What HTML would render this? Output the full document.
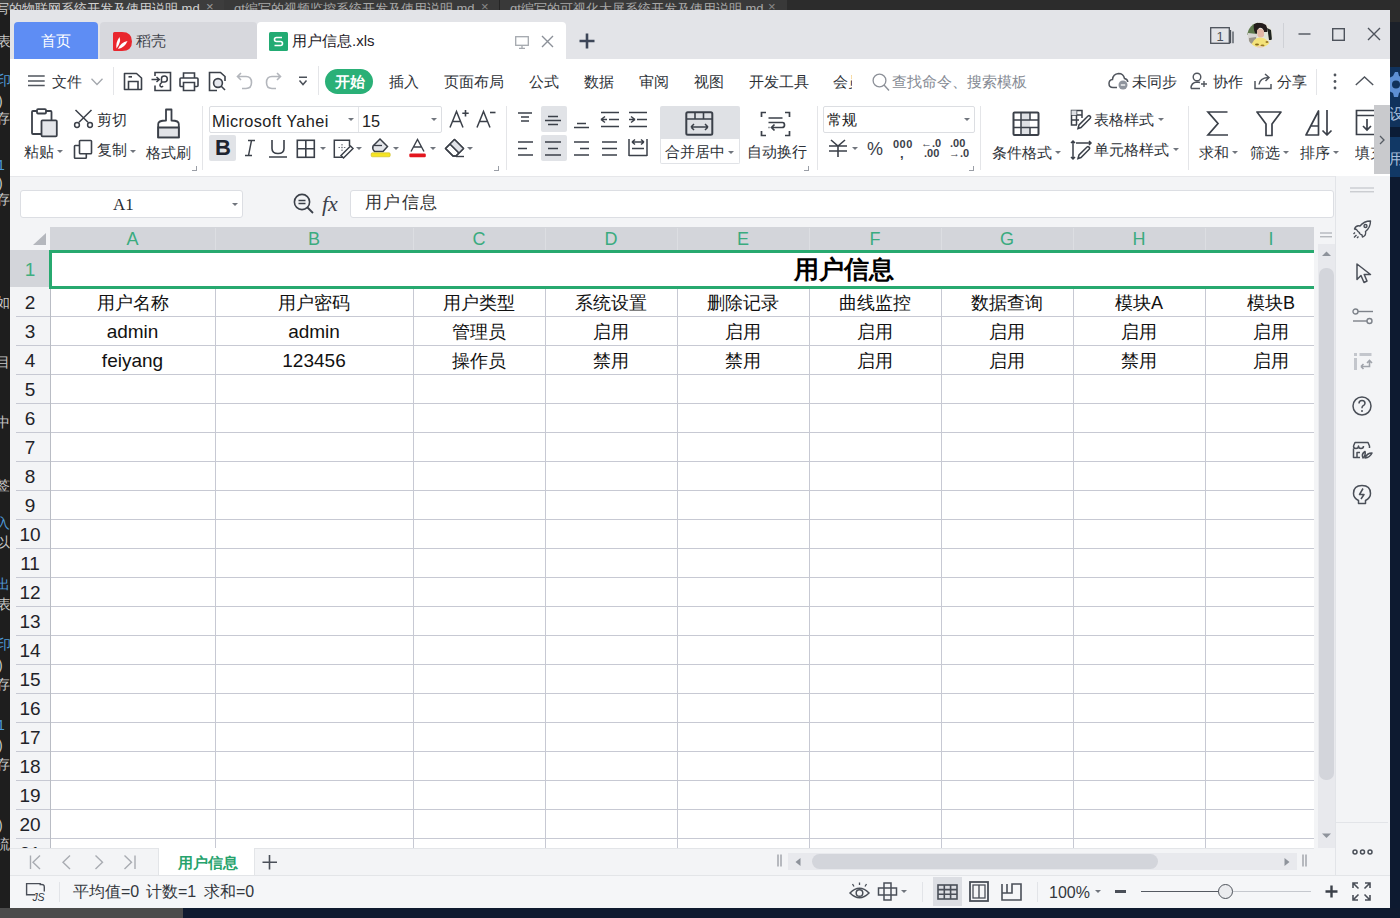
<!DOCTYPE html>
<html><head><meta charset="utf-8">
<style>
*{box-sizing:border-box;margin:0;padding:0}
html,body{width:1400px;height:918px;overflow:hidden;background:#1e1e1e;font-family:"Liberation Sans",sans-serif;color:#2b2f36}
.a{position:absolute}
.t{position:absolute;white-space:nowrap;line-height:1}
svg{position:absolute;overflow:visible}
/* background strips */
#topstrip{left:0;top:0;width:1400px;height:10px;background:#3b3b3b;overflow:hidden}
#win{left:10px;top:10px;width:1380px;height:898px;background:#fff;overflow:hidden}
#titlebar{left:0;top:0;width:1380px;height:49px;background:#e3e4e8}
.ic{stroke:#3b4049;fill:none;stroke-width:1.4}
.lbl{font-size:15px;color:#2e3238}
.tri{position:absolute;width:0;height:0;border-left:3px solid transparent;border-right:3px solid transparent;border-top:3px solid #70757d}
.sep{position:absolute;width:1px;background:#e4e5e8}
.corner{position:absolute;width:5px;height:5px;border-right:1px solid #9a9ea6;border-bottom:1px solid #9a9ea6}
.hl{position:absolute;background:#e1e3e7;border-radius:2px}
.colh{position:absolute;top:217px;height:23px;font-size:18px;color:#3aab7f;text-align:center;line-height:23px}
.rowh{position:absolute;left:0;width:40px;font-size:19px;text-align:center;color:#1f2329}
.cell{position:absolute;font-size:18px;text-align:center;color:#111;white-space:nowrap}
</style></head><body>
<div id="topstrip" class="a">
  <div class="a" style="left:0;top:0;width:224px;height:10px;background:#3d3d3d"></div>
  <div class="t" style="left:-4px;top:2px;font-size:13px;color:#d0d0d0">写的物联网系统开发及使用说明.md</div>
  <div class="t" style="left:206px;top:0px;font-size:13px;color:#9a9a9a">×</div>
  <div class="a" style="left:224px;top:0;width:275px;height:10px;background:#393939"></div>
  <div class="t" style="left:234px;top:2px;font-size:13px;color:#a8a8a8">qt编写的视频监控系统开发及使用说明.md</div>
  <div class="t" style="left:481px;top:0px;font-size:13px;color:#8a8a8a">×</div>
  <div class="a" style="left:499px;top:0;width:1px;height:10px;background:#252525"></div>
  <div class="a" style="left:500px;top:0;width:287px;height:10px;background:#393939"></div>
  <div class="t" style="left:510px;top:2px;font-size:13px;color:#a8a8a8">qt编写的可视化大屏系统开发及使用说明.md</div>
  <div class="t" style="left:768px;top:0px;font-size:13px;color:#8a8a8a">×</div>
  <div class="a" style="left:787px;top:0;width:613px;height:10px;background:#2c2c2c"></div>
</div>
<!-- left strip -->
<div class="a" style="left:0;top:10px;width:10px;height:898px;background:#1e1e1e;overflow:hidden">
  <div class="t" style="left:-4px;top:-8px;font-size:13px;color:#d0d0d0">写</div>
  <div class="t" style="left:-3px;top:24px;font-size:14px;color:#c8c8c8">表</div>
  <div class="t" style="left:-3px;top:63px;font-size:14px;color:#4f9ad8">印</div>
  <div class="t" style="left:-2px;top:84px;font-size:14px;color:#c8c8c8">)</div>
  <div class="t" style="left:-4px;top:101px;font-size:14px;color:#c8c8c8">存</div>
  <div class="t" style="left:-3px;top:148px;font-size:14px;color:#4f9ad8">1</div>
  <div class="t" style="left:-2px;top:166px;font-size:14px;color:#c8c8c8">)</div>
  <div class="t" style="left:-4px;top:182px;font-size:14px;color:#c8c8c8">存</div>
  <div class="t" style="left:-4px;top:285px;font-size:14px;color:#c8c8c8">如</div>
  <div class="t" style="left:-4px;top:345px;font-size:14px;color:#c8c8c8">目</div>
  <div class="t" style="left:-4px;top:405px;font-size:14px;color:#c8c8c8">中</div>
  <div class="t" style="left:-4px;top:468px;font-size:14px;color:#c8c8c8">签</div>
  <div class="t" style="left:-4px;top:506px;font-size:14px;color:#4f9ad8">入</div>
  <div class="t" style="left:-4px;top:525px;font-size:14px;color:#c8c8c8">以</div>
  <div class="t" style="left:-4px;top:567px;font-size:14px;color:#4f9ad8">出</div>
  <div class="t" style="left:-3px;top:587px;font-size:14px;color:#c8c8c8">表</div>
  <div class="t" style="left:-3px;top:627px;font-size:14px;color:#4f9ad8">印</div>
  <div class="t" style="left:-2px;top:648px;font-size:14px;color:#c8c8c8">)</div>
  <div class="t" style="left:-4px;top:667px;font-size:14px;color:#c8c8c8">存</div>
  <div class="t" style="left:-3px;top:708px;font-size:14px;color:#4f9ad8">1</div>
  <div class="t" style="left:-2px;top:728px;font-size:14px;color:#c8c8c8">)</div>
  <div class="t" style="left:-4px;top:747px;font-size:14px;color:#c8c8c8">存</div>
  <div class="t" style="left:-2px;top:808px;font-size:14px;color:#c8c8c8">)</div>
  <div class="t" style="left:-4px;top:827px;font-size:14px;color:#c8c8c8">流</div>
</div>
<!-- right strip -->
<div class="a" style="left:1390px;top:10px;width:10px;height:908px;background:#0d1a30;overflow:hidden">
  <div class="a" style="left:0;top:0;width:10px;height:12px;background:#2b2b2b"></div>
  <div class="a" style="left:0;top:12px;width:10px;height:45px;background:#1b2029"></div>
  <div class="a" style="left:0;top:57px;width:10px;height:60px;background:#10325c"></div>
  <div class="a" style="left:0;top:117px;width:10px;height:10px;background:#0b1c36"></div>
  <div class="a" style="left:0;top:127px;width:10px;height:40px;background:#113865"></div>
  <svg style="left:-6px;top:60px" width="22" height="30" viewBox="0 0 22 30"><path d="M11 2 L14 2 L15 6 L19 8 L22 6 L24 9 L21 12 L21 17 L24 20 L22 23 L18 21 L15 23 L14 27 L10 27 L9 23 L5 21 L2 23 L0 20 L3 17 L3 12 L0 9 L2 6 L5 8 L9 6 Z" fill="#5d8fd3"/><circle cx="12" cy="14.5" r="4" fill="#10325c"/></svg>
  <div class="t" style="left:-1px;top:96px;font-size:15px;color:#a9bfdc">设</div>
  <div class="t" style="left:-1px;top:141px;font-size:15px;color:#a9bfdc">用</div>
</div>
<div class="a" style="left:0;top:908px;width:183px;height:10px;background:#4b4b4b"></div>
<div class="a" style="left:183px;top:908px;width:1217px;height:10px;background:#0f1a2f"></div>

<div class="a" style="left:10px;top:10px;width:1380px;height:898px;background:#fff"></div>
<!-- TITLEBAR -->
<div class="a" style="left:10px;top:10px;width:1380px;height:49px;background:#e3e4e8"></div>
<div class="a" style="left:14px;top:22px;width:84px;height:37px;background:#5e8df4;border-radius:4px 4px 0 0"></div>
<div class="t" style="left:41px;top:33px;font-size:15px;color:#fff">首页</div>
<div class="a" style="left:100px;top:22px;width:157px;height:37px;background:#d7d8dd;border-radius:4px 4px 0 0"></div>
<div class="t" style="left:136px;top:33px;font-size:15px;color:#3d4149">稻壳</div>
<div class="a" style="left:257px;top:22px;width:309px;height:37px;background:#fff;border-radius:4px 4px 0 0"></div>
<div class="t" style="left:292px;top:33px;font-size:15px;color:#1d2128">用户信息.xls</div>
<!--TITLEICONS--><svg style="left:113px;top:32px" width="20" height="20" viewBox="0 0 20 20"><path d="M0 1.5 Q0 0 1.5 0 L9 0 Q19 0 19 9.5 Q19 19 9 19 L1.5 19 Q0 19 0 17.5 Z" fill="#e9262d"/><path d="M3.5 16.5 Q2.5 10.5 6.5 5 Q8.5 10 3.5 16.5 Z" fill="#fff"/><path d="M5 17 Q7.5 10.5 14.5 9 Q12 15.5 5 17 Z" fill="#fff"/></svg>
<svg style="left:269px;top:32px" width="19" height="19" viewBox="0 0 19 19"><rect x="0" y="0" width="19" height="19" rx="1.5" fill="#22ab73"/><path d="M13 5.5 L7.5 5.5 Q5.5 5.5 5.5 7.5 Q5.5 9.5 7.5 9.5 L11.5 9.5 Q13.5 9.5 13.5 11.5 Q13.5 13.5 11.5 13.5 L5.5 13.5" stroke="#fff" stroke-width="1.6" fill="none"/></svg>
<svg style="left:515px;top:36px" width="14" height="13" viewBox="0 0 14 13"><rect x="0.7" y="0.7" width="12.6" height="8.6" stroke="#a4a8ae" stroke-width="1.3" fill="none"/><path d="M7 9.5 V12.3 M4 12.3 H10" stroke="#a4a8ae" stroke-width="1.3"/></svg>
<svg style="left:541px;top:35px" width="13" height="13" viewBox="0 0 13 13"><path d="M1 1 L12 12 M12 1 L1 12" stroke="#8b9098" stroke-width="1.4"/></svg>
<svg style="left:579px;top:33px" width="16" height="16" viewBox="0 0 16 16"><path d="M8 0.5 V15.5 M0.5 8 H15.5" stroke="#3d4658" stroke-width="2.6"/></svg>
<svg style="left:1210px;top:27px" width="26" height="17" viewBox="0 0 26 17"><rect x="0.7" y="0.7" width="18.6" height="15.6" stroke="#4b5059" stroke-width="1.3" fill="none"/><path d="M20.5 3 V16.3 M23 4.5 V16.3" stroke="#4b5059" stroke-width="1.3"/><text x="10" y="13.5" font-size="13" text-anchor="middle" fill="#4b5059" font-family="Liberation Sans">1</text></svg>
<svg style="left:1247px;top:22px" width="26" height="26" viewBox="0 0 26 26"><defs><clipPath id="av"><circle cx="13" cy="13" r="12.5"/></clipPath></defs><g clip-path="url(#av)"><rect width="26" height="26" fill="#e6e4d8"/><path d="M0 0 H11 L9 12 L0 13 Z" fill="#5f7a4e"/><path d="M1 11 L10 12 L10 18 L1 19 Z" fill="#d8d6d3"/><path d="M2 16 L9 15 V21 L2 22 Z" fill="#9a958c"/><path d="M7 2 Q13 -1 19 3 Q21 7 20 11 L17 10 Q16 5 12 6 Q10 8 10 12 L8 11 Q6 6 7 2 Z" fill="#231c1c"/><path d="M10 8 Q14 5 17 9 L17 14 Q13.5 17 10.5 14 Z" fill="#e2b6a6"/><path d="M20 6 L24 8 L25 18 L22 18 L21 11 Z" fill="#1f2420"/><path d="M17 10 L21 10 L21 17 L17 16 Z" fill="#dfe4d8"/><path d="M4 26 Q5 16 13 15.5 Q22 16 24 26 Z" fill="#f3e27a"/><ellipse cx="10" cy="22.5" rx="2" ry="1" fill="#8a6a18"/><ellipse cx="15.5" cy="23.5" rx="2" ry="1" fill="#9a7a28"/><ellipse cx="20" cy="20" rx="1.5" ry="1" fill="#9a7a28"/><path d="M9 25 Q13 23 17 25 V26 H9 Z" fill="#e9c9c9"/></g></svg>
<div class="a" style="left:1283px;top:23px;width:1px;height:25px;background:#cfd1d6"></div>
<svg style="left:1298px;top:33px" width="14" height="3" viewBox="0 0 14 3"><path d="M0.5 1 H12.5" stroke="#4e535c" stroke-width="1.4"/></svg>
<svg style="left:1332px;top:28px" width="13" height="13" viewBox="0 0 13 13"><rect x="0.7" y="0.7" width="11.6" height="11.6" stroke="#4e535c" stroke-width="1.4" fill="none"/></svg>
<svg style="left:1367px;top:27px" width="14" height="14" viewBox="0 0 14 14"><path d="M1 1 L13 13 M13 1 L1 13" stroke="#4e535c" stroke-width="1.4"/></svg>

<!-- TOOLBAR ROW1 -->
<div class="t lbl" style="left:52px;top:74px">文件</div>
<div class="sep" style="left:113px;top:67px;height:28px"></div>
<div class="sep" style="left:318px;top:66px;height:29px"></div>
<div class="a" style="left:325px;top:69px;width:48px;height:25px;border-radius:13px;background:#2ab077"></div>
<div class="t" style="left:335px;top:74px;font-size:15px;color:#fff;font-weight:bold">开始</div>
<div class="t lbl" style="left:389px;top:74px">插入</div>
<div class="t lbl" style="left:444px;top:74px">页面布局</div>
<div class="t lbl" style="left:529px;top:74px">公式</div>
<div class="t lbl" style="left:584px;top:74px">数据</div>
<div class="t lbl" style="left:639px;top:74px">审阅</div>
<div class="t lbl" style="left:694px;top:74px">视图</div>
<div class="t lbl" style="left:749px;top:74px">开发工具</div>
<div class="a" style="left:833px;top:66px;width:19px;height:30px;overflow:hidden"><div class="t lbl" style="left:0;top:8px">会员</div></div>
<div class="t" style="left:892px;top:74px;font-size:15px;color:#868b94">查找命令、搜索模板</div>
<div class="t lbl" style="left:1132px;top:74px">未同步</div>
<div class="t lbl" style="left:1213px;top:74px">协作</div>
<div class="t lbl" style="left:1277px;top:74px">分享</div>
<div class="sep" style="left:1316px;top:69px;height:26px"></div>
<!--ROW1ICONS--><svg style="left:28px;top:75px" width="17" height="12" viewBox="0 0 17 12"><path d="M0 1 H16.7 M0 6 H16.7 M0 10.5 H16.7" stroke="#50555d" stroke-width="1.5"/></svg>
<svg style="left:91px;top:78px" width="12" height="8" viewBox="0 0 12 8"><path d="M0.5 0.8 L6 6.5 L11.5 0.8" stroke="#a3a7ad" stroke-width="1.3" fill="none"/></svg>
<svg style="left:123px;top:72px" width="20" height="19" viewBox="0 0 20 19"><path d="M1.5 1.5 H13.5 L18.5 6 V17.5 H1.5 Z" stroke="#3b4049" stroke-width="1.6" fill="none" stroke-linejoin="round"/><path d="M5.5 17.5 V9.5 H15 V17.5" stroke="#3b4049" stroke-width="1.6" fill="none"/><path d="M5.5 4.8 H9" stroke="#3b4049" stroke-width="1.7"/></svg>
<svg style="left:151px;top:71px" width="21" height="21" viewBox="0 0 21 21"><path d="M4 5 V1.5 H19.5 V19.5 H4 V14.5" stroke="#3b4049" stroke-width="1.6" fill="none"/><path d="M0.5 8.5 H8 M5.5 6 L8.3 8.5 L5.5 11" stroke="#3b4049" stroke-width="1.5" fill="none"/><path d="M10.5 12 V7.5 Q10.5 5 13.3 5 Q16.3 5 16.3 8 Q16.3 11 13.3 11 H10.5 M10.5 12 Q8 13.5 9.5 15.5 Q11 16.5 12 15" stroke="#3b4049" stroke-width="1.5" fill="none"/></svg>
<svg style="left:179px;top:71px" width="20" height="21" viewBox="0 0 20 21"><path d="M4.5 7 V2 H15.5 V7" stroke="#3b4049" stroke-width="1.6" fill="none"/><path d="M4 15.5 H1.5 Q1 15.5 1 14.5 V8 Q1 7 2 7 H18 Q19 7 19 8 V14.5 Q19 15.5 18 15.5 H16" stroke="#3b4049" stroke-width="1.6" fill="none"/><path d="M4.5 19.5 V11.5 H15.5 V19.5 Z" stroke="#3b4049" stroke-width="1.6" fill="none"/></svg>
<svg style="left:208px;top:71px" width="19" height="21" viewBox="0 0 19 21"><path d="M9 19.5 H1.5 V1.5 H12.5 L17 5.5 V10" stroke="#3b4049" stroke-width="1.6" fill="none"/><circle cx="10" cy="12" r="4.4" stroke="#3b4049" stroke-width="1.6" fill="#e6e8ee"/><path d="M13 15 L17 19" stroke="#3b4049" stroke-width="1.6"/></svg>
<svg style="left:236px;top:72px" width="17" height="18" viewBox="0 0 17 18"><path d="M5 1 L1.5 4.5 L5 8 M1.5 4.5 H10 Q15.5 4.5 15.5 10.5 Q15.5 16.5 10 16.5 H6" stroke="#b3b6bc" stroke-width="1.6" fill="none"/></svg>
<svg style="left:265px;top:72px" width="17" height="18" viewBox="0 0 17 18"><path d="M12 1 L15.5 4.5 L12 8 M15.5 4.5 H7 Q1.5 4.5 1.5 10.5 Q1.5 16.5 7 16.5 H11" stroke="#b3b6bc" stroke-width="1.6" fill="none"/></svg>
<svg style="left:298px;top:76px" width="10" height="11" viewBox="0 0 10 11"><path d="M1 1.2 H9 M1.5 4.5 L5 8.5 L8.5 4.5" stroke="#4b5059" stroke-width="1.5" fill="none"/></svg>
<svg style="left:872px;top:73px" width="19" height="19" viewBox="0 0 19 19"><circle cx="7.5" cy="7.5" r="6.4" stroke="#8c9098" stroke-width="1.3" fill="none"/><path d="M12 12 L17 17.4" stroke="#8c9098" stroke-width="1.4"/></svg>
<svg style="left:1108px;top:72px" width="22" height="18" viewBox="0 0 22 18"><path d="M9 15.5 H5 Q1 15.5 1 11.5 Q1 8 4.5 7.5 Q5 2 10.5 1.5 Q15.5 1.5 16.5 6.5 Q19.5 7 19.8 10" stroke="#50555d" stroke-width="1.5" fill="none"/><circle cx="15" cy="13" r="4.5" fill="#8f949d"/><path d="M12.8 13 H17.2" stroke="#fff" stroke-width="1.3"/></svg>
<svg style="left:1190px;top:72px" width="18" height="18" viewBox="0 0 18 18"><circle cx="7" cy="5" r="3.8" stroke="#50555d" stroke-width="1.4" fill="none"/><path d="M1 16.5 Q1 10.5 7 10 Q9 10 10 10.5 M1 16.5 H10" stroke="#50555d" stroke-width="1.4" fill="none"/><path d="M14 9 V15 M11 12 H17" stroke="#50555d" stroke-width="1.4"/></svg>
<svg style="left:1254px;top:72px" width="19" height="18" viewBox="0 0 19 18"><path d="M1 9 V16.5 H17 V12" stroke="#50555d" stroke-width="1.5" fill="none"/><path d="M5 12.5 Q6 6 14 5.5 M11 2 L15 5.5 L11.5 9" stroke="#50555d" stroke-width="1.5" fill="none"/></svg>
<svg style="left:1333px;top:73px" width="4" height="17" viewBox="0 0 4 17"><circle cx="2" cy="2" r="1.4" fill="#50555d"/><circle cx="2" cy="8.5" r="1.4" fill="#50555d"/><circle cx="2" cy="15" r="1.4" fill="#50555d"/></svg>
<svg style="left:1355px;top:76px" width="19" height="10" viewBox="0 0 19 10"><path d="M0.8 9 L9.5 1 L18.2 9" stroke="#50555d" stroke-width="1.4" fill="none"/></svg>

<!-- RIBBON -->
<!--RIBBON--><!-- clipboard group -->
<svg style="left:31px;top:108px" width="27" height="30" viewBox="0 0 27 30"><path d="M6 3 H2 Q1 3 1 4 V25 Q1 26 2 26 H10" stroke="#3b4049" stroke-width="1.8" fill="none"/><path d="M15 3 H19.5 Q20.5 3 20.5 4 V12" stroke="#3b4049" stroke-width="1.8" fill="none"/><rect x="6" y="1.2" width="9" height="4.3" rx="1" stroke="#3b4049" stroke-width="1.8" fill="#fff"/><rect x="10.5" y="12.3" width="15.3" height="16" rx="1" stroke="#3b4049" stroke-width="1.8" fill="#e4e6ea"/></svg>
<div class="t" style="left:24px;top:144px;font-size:15px;color:#2e3238">粘贴</div>
<div class="tri" style="left:57px;top:150px"></div>
<svg style="left:74px;top:109px" width="19" height="19" viewBox="0 0 19 19"><path d="M1.5 1 L14 13.3 M17.5 1 L5 13.3" stroke="#3b4049" stroke-width="1.5"/><circle cx="3" cy="16" r="2.4" stroke="#3b4049" stroke-width="1.5" fill="#fff"/><circle cx="16" cy="16" r="2.4" stroke="#3b4049" stroke-width="1.5" fill="#fff"/></svg>
<div class="t" style="left:97px;top:112px;font-size:15px;color:#2e3238">剪切</div>
<svg style="left:73px;top:139px" width="20" height="21" viewBox="0 0 20 21"><path d="M6 6.5 H2.2 Q1.5 6.5 1.5 7.3 V18.5 Q1.5 19.3 2.2 19.3 H12.5 Q13.3 19.3 13.3 18.5 V15" stroke="#3b4049" stroke-width="1.6" fill="none"/><rect x="6.5" y="1.5" width="12" height="13.3" rx="0.8" stroke="#3b4049" stroke-width="1.6" fill="#fff"/></svg>
<div class="t" style="left:97px;top:142px;font-size:15px;color:#2e3238">复制</div>
<div class="tri" style="left:130px;top:150px"></div>
<svg style="left:157px;top:108px" width="23" height="31" viewBox="0 0 23 31"><path d="M9 12.5 V1.5 H14.5 V12.5 Q21.8 12.5 21.8 16 V29.3 H1.2 V16 Q1.2 12.5 9 12.5 Z" stroke="#3b4049" stroke-width="1.8" fill="#fff" stroke-linejoin="round"/><path d="M1.2 19.5 H21.8 V29.3 H1.2 Z" stroke="#3b4049" stroke-width="1.8" fill="#e1e3e7"/></svg>
<div class="t" style="left:146px;top:145px;font-size:15px;color:#2e3238">格式刷</div>
<div class="corner" style="left:192px;top:166px"></div>
<div class="sep" style="left:202px;top:106px;height:64px"></div>
<!-- font group -->
<div class="a" style="left:209px;top:106px;width:233px;height:27px;border:1px solid #dcdee2;border-radius:2px"></div>
<div class="a" style="left:358px;top:107px;width:1px;height:25px;background:#e3e5e8"></div>
<div class="t" style="left:212px;top:113px;font-size:16.3px;letter-spacing:0.4px;color:#222">Microsoft Yahei</div>
<div class="tri" style="left:348px;top:118px"></div>
<div class="t" style="left:362px;top:113px;font-size:16.3px;color:#222">15</div>
<div class="tri" style="left:431px;top:118px"></div>
<svg style="left:449px;top:109px" width="48" height="20" viewBox="0 0 48 20"><path d="M1 18.5 L7.5 2.5 L14 18.5 M3.6 12.5 H11.4" stroke="#3b4049" stroke-width="1.5" fill="none"/><path d="M16.5 1 V7.5 M13.3 4.2 H19.7" stroke="#3b4049" stroke-width="1.6"/><path d="M28 18.5 L34.5 2.5 L41 18.5 M30.6 12.5 H38.4" stroke="#3b4049" stroke-width="1.5" fill="none"/><path d="M41 3.5 H46.5" stroke="#3b4049" stroke-width="1.6"/></svg>
<div class="hl" style="left:209px;top:135px;width:27px;height:26px"></div>
<div class="t" style="left:215px;top:137px;font-size:22px;font-weight:bold;color:#1f2430">B</div>
<svg style="left:244px;top:139px" width="12" height="18" viewBox="0 0 12 18"><path d="M4 1.5 H11 M1 16.5 H8 M7.5 1.5 L4.5 16.5" stroke="#3b4049" stroke-width="1.4" fill="none"/></svg>
<svg style="left:268px;top:139px" width="20" height="20" viewBox="0 0 20 20"><path d="M4 1 V9.5 Q4 14.5 10 14.5 Q16 14.5 16 9.5 V1" stroke="#3b4049" stroke-width="1.6" fill="none"/><path d="M1 18 H19" stroke="#3b4049" stroke-width="1.5"/></svg>
<svg style="left:296px;top:139px" width="20" height="20" viewBox="0 0 20 20"><rect x="1.3" y="1.3" width="17" height="17" stroke="#3b4049" stroke-width="1.6" fill="none"/><path d="M9.8 1.3 V18.3 M1.3 9.8 H18.3" stroke="#3b4049" stroke-width="1.6"/></svg>
<div class="tri" style="left:320px;top:147px"></div>
<svg style="left:333px;top:139px" width="21" height="20" viewBox="0 0 21 20"><path d="M10 18.3 H1.3 V1.3 H16.5 V7" stroke="#3b4049" stroke-width="1.5" fill="none"/><path d="M9 5 V12 M5.5 8.5 H12.5" stroke="#70757d" stroke-width="1.2" stroke-dasharray="1.5 1.2"/><path d="M8 18.5 L17.5 9 L20 11.5 L10.5 21 Z" stroke="#3b4049" stroke-width="1.5" fill="#fff" transform="translate(0,-2)"/></svg>
<div class="tri" style="left:356px;top:147px"></div>
<svg style="left:370px;top:137px" width="22" height="21" viewBox="0 0 22 21"><path d="M3 9 L10 2 L17.5 9.5 L13 14.5 H4.5 Q2 12 3 9 Z" stroke="#3b4049" stroke-width="1.5" fill="#e4e6ea"/><path d="M3 8.5 L12 8.5" stroke="#3b4049" stroke-width="1.3"/><rect x="1.2" y="15.8" width="19" height="4" rx="1.2" fill="#f5e425" stroke="#c9bb20" stroke-width="0.6"/></svg>
<div class="tri" style="left:393px;top:147px"></div>
<svg style="left:408px;top:138px" width="19" height="20" viewBox="0 0 19 20"><path d="M3 13.5 L9.5 1.5 L16 13.5 M5.5 9 H13.5" stroke="#3b4049" stroke-width="1.4" fill="none"/><rect x="1.3" y="15.5" width="16.5" height="3.8" rx="1.2" fill="#e3161e"/></svg>
<div class="tri" style="left:430px;top:147px"></div>
<svg style="left:444px;top:138px" width="22" height="20" viewBox="0 0 22 20"><path d="M1.5 10.5 L10.5 1.5 L19.5 10.5 L12 18 H9 Z" stroke="#3b4049" stroke-width="1.5" fill="#fff" stroke-linejoin="round"/><path d="M6 6 L15 15" stroke="#3b4049" stroke-width="1.4"/><path d="M10.5 1.5 L19.5 10.5 L15 15 L6 6 Z" fill="#e1e3e8"/><path d="M1.5 10.5 L10.5 1.5 L19.5 10.5 L12 18 H9 Z M6 6 L15 15" stroke="#3b4049" stroke-width="1.5" fill="none" stroke-linejoin="round"/><path d="M12 18.5 H20" stroke="#3b4049" stroke-width="1.4"/></svg>
<div class="tri" style="left:467px;top:147px"></div>
<div class="corner" style="left:494px;top:166px"></div>
<div class="sep" style="left:506px;top:106px;height:64px"></div>
<!-- alignment group -->
<div class="hl" style="left:541px;top:106px;width:26px;height:26px"></div>
<div class="hl" style="left:541px;top:135px;width:26px;height:26px"></div>
<svg style="left:516px;top:110px" width="140" height="52" viewBox="0 0 140 52" stroke="#3b4049" stroke-width="1.5" fill="none">
 <path d="M2 3 H16 M5 7 H13 M5 11 H13"/>
 <path d="M29 10.5 H45 M32 6.5 H42 M32 14.5 H42"/>
 <path d="M58 17.5 H73 M61 13.5 H70"/>
 <path d="M85 2.5 H103 M93 9.5 H103 M85 16.5 H103 M85 9.5 L89 6.5 M85 9.5 L89 12.5 M85 9.5 H91"/>
 <path d="M113 2.5 H131 M121 9.5 H131 M113 16.5 H131 M119 9.5 L115 6.5 M119 9.5 L115 12.5 M113 9.5 H119"/>
 <path d="M2 32 H17 M2 38.5 H11 M2 45 H17"/>
 <path d="M29 32 H45 M32 38.5 H42 M29 45 H45"/>
 <path d="M58 32 H73 M64 38.5 H73 M58 45 H73"/>
 <path d="M86 32 H101 M86 38.5 H101 M86 45 H101"/>
 <path d="M113 29 V46 M131 29 V46 M113 45.5 H131 M116 38.5 H128 M116 32 H128 M116 32 L119 29.5 M116 32 L119 34.5 M128 32 L125 29.5 M128 32 L125 34.5"/>
</svg>
<div class="a" style="left:660px;top:106px;width:80px;height:33px;background:#dfe1e5;border-radius:2px 2px 0 0"></div>
<div class="a" style="left:660px;top:139px;width:80px;height:25px;background:#fff;border:1px solid #e1e3e7;border-top:none;border-radius:0 0 2px 2px"></div>
<svg style="left:685px;top:111px" width="29" height="26" viewBox="0 0 29 26"><rect x="1.3" y="1.3" width="26" height="22.5" rx="1.5" stroke="#3b4049" stroke-width="2" fill="none"/><path d="M1.3 8 H27.3 M10 1.3 V8 M18.5 1.3 V8" stroke="#3b4049" stroke-width="1.6"/><path d="M6 16 H23 M6 16 L9 13 M6 16 L9 19 M23 16 L20 13 M23 16 L20 19" stroke="#3b4049" stroke-width="1.5" fill="none"/></svg>
<div class="t" style="left:665px;top:144px;font-size:15px;color:#2e3238">合并居中</div>
<div class="tri" style="left:728px;top:151px"></div>
<svg style="left:760px;top:111px" width="31" height="26" viewBox="0 0 31 26" stroke="#3b4049" stroke-width="1.7" fill="none"><path d="M6 1.5 H1.5 V6 M25 1.5 H29.5 V6 M6 24.5 H1.5 V20 M25 24.5 H29.5 V20"/><path d="M8.5 7 H22.5 M8.5 11.5 H22.5 Q24.5 11.5 24.5 14 Q24.5 16.5 22 16.5 H12 M14.5 13.5 L11.5 16.5 L14.5 19.5 M8.5 16.5 H9.5"/></svg>
<div class="t" style="left:747px;top:144px;font-size:15px;color:#2e3238">自动换行</div>
<div class="corner" style="left:804px;top:166px"></div>
<div class="sep" style="left:817px;top:106px;height:64px"></div>
<!-- number group -->
<div class="a" style="left:823px;top:106px;width:152px;height:27px;border:1px solid #dcdee2;border-radius:2px"></div>
<div class="t" style="left:827px;top:112px;font-size:15px;color:#222">常规</div>
<div class="tri" style="left:964px;top:118px"></div>
<svg style="left:828px;top:139px" width="20" height="19" viewBox="0 0 20 19" stroke="#3b4049" stroke-width="1.6" fill="none"><path d="M3 1 L10 7 L17 1 M1 7 H19 M1 12 H19 M10 7 V18"/></svg>
<div class="tri" style="left:852px;top:147px"></div>
<div class="t" style="left:867px;top:140px;font-size:18px;color:#3b4049">%</div>
<div class="t" style="left:893px;top:139px;font-size:11px;color:#3b4049;letter-spacing:0.5px;font-weight:bold">000</div>
<div class="t" style="left:900px;top:147px;font-size:13px;color:#3b4049;font-weight:bold">,</div>
<div class="t" style="left:921px;top:138px;font-size:11px;color:#3b4049;font-weight:bold">←.0</div>
<div class="t" style="left:924px;top:148px;font-size:11px;color:#3b4049;font-weight:bold">.00</div>
<div class="t" style="left:950px;top:138px;font-size:11px;color:#3b4049;font-weight:bold">.00</div>
<div class="t" style="left:949px;top:148px;font-size:11px;color:#3b4049;font-weight:bold">→.0</div>
<div class="corner" style="left:969px;top:166px"></div>
<div class="sep" style="left:980px;top:106px;height:64px"></div>
<!-- styles group -->
<svg style="left:1012px;top:111px" width="28" height="26" viewBox="0 0 28 26"><rect x="9" y="1.5" width="9" height="7" fill="#dfe1e5"/><rect x="9" y="8.5" width="9" height="15" fill="#dfe1e5"/><rect x="9" y="16" width="9" height="8" fill="#dfe1e5"/><rect x="1.5" y="1.5" width="25" height="22.5" rx="1" stroke="#3b4049" stroke-width="2" fill="none"/><path d="M1.5 9 H26.5 M1.5 16.5 H26.5 M9 1.5 V24 M18 1.5 V9 M18 16.5 V24" stroke="#3b4049" stroke-width="1.5"/></svg>
<div class="t" style="left:992px;top:145px;font-size:15px;color:#2e3238">条件格式</div>
<div class="tri" style="left:1055px;top:151px"></div>
<svg style="left:1070px;top:109px" width="22" height="21" viewBox="0 0 22 21" stroke="#3b4049" stroke-width="1.5" fill="none"><path d="M12 9 V1.5 H1.5 V16 H7"/><path d="M1.5 6 H12 M1.5 11 H9 M6.5 1.5 V16"/><rect x="1.5" y="1.5" width="5" height="4.5" fill="#dfe1e5" stroke="none"/><path d="M8 19.5 L9 16 L18 7 Q19.5 6 20.5 7.5 Q21 8.5 20 9.5 L11 18.5 Z"/></svg>
<div class="t" style="left:1094px;top:112px;font-size:15px;color:#2e3238">表格样式</div>
<div class="tri" style="left:1158px;top:118px"></div>
<svg style="left:1070px;top:140px" width="22" height="20" viewBox="0 0 22 20" stroke="#3b4049" stroke-width="1.5" fill="none"><path d="M3 1 V19 M1 3 L3 1 L5 3 M1 17 L3 19 L5 17 M6 3 H21 M19 1 L21 3 L19 5"/><path d="M8 18.5 L9 15 L17 7 Q18.5 6 19.5 7.5 Q20 8.5 19 9.5 L11 17.5 Z"/></svg>
<div class="t" style="left:1094px;top:142px;font-size:15px;color:#2e3238">单元格样式</div>
<div class="tri" style="left:1173px;top:148px"></div>
<div class="sep" style="left:1188px;top:106px;height:64px"></div>
<!-- edit group -->
<svg style="left:1206px;top:110px" width="24" height="27" viewBox="0 0 24 27" stroke="#3b4049" stroke-width="1.7" fill="none"><path d="M21.5 2 H2 L12 13.5 L2 25 H22"/></svg>
<div class="t" style="left:1199px;top:145px;font-size:15px;color:#2e3238">求和</div>
<div class="tri" style="left:1232px;top:151px"></div>
<svg style="left:1255px;top:110px" width="28" height="27" viewBox="0 0 28 27" stroke="#3b4049" stroke-width="1.7" fill="none" stroke-linejoin="round"><path d="M2 2 H26 L17 14 V25.5 H11 V14 Z"/></svg>
<div class="t" style="left:1250px;top:145px;font-size:15px;color:#2e3238">筛选</div>
<div class="tri" style="left:1283px;top:151px"></div>
<svg style="left:1304px;top:109px" width="30" height="28" viewBox="0 0 30 28" stroke="#3b4049" stroke-width="1.7" fill="none" stroke-linejoin="round"><path d="M2 26 L14.5 2 V26 Z M7 17 H14.5"/><path d="M23 1 V26 M18.5 21.5 L23 26 L27.5 21.5"/></svg>
<div class="t" style="left:1300px;top:145px;font-size:15px;color:#2e3238">排序</div>
<div class="tri" style="left:1333px;top:151px"></div>
<div class="a" style="left:1355px;top:104px;width:19px;height:70px;overflow:hidden">
 <svg style="left:0;top:5px" width="24" height="27" viewBox="0 0 24 27" stroke="#3b4049" stroke-width="1.7" fill="none"><path d="M1.5 1.5 H22 V25.5 H1.5 Z M1.5 6.5 H22"/><path d="M12 10 V21 M8 17 L12 21 L16 17"/></svg>
 <div class="t" style="left:0;top:41px;font-size:15px;color:#2e3238">填充</div>
</div>
<div class="a" style="left:1374px;top:105px;width:16px;height:69px;background:#c9cacd"></div>
<svg style="left:1379px;top:135px" width="6" height="10" viewBox="0 0 6 10"><path d="M1 1 L5 5 L1 9" stroke="#555b63" stroke-width="1.3" fill="none"/></svg>
<!--/RIBBON-->
<div class="a" style="left:10px;top:176px;width:1380px;height:1px;background:#e6e7ea"></div>
<!-- FORMULA BAR -->
<div class="a" style="left:10px;top:177px;width:1325px;height:50px;background:#f3f4f6"></div>
<div class="a" style="left:20px;top:190px;width:223px;height:28px;background:#fff;border:1px solid #dcdee3;border-radius:3px"></div>
<div class="t" style="left:113px;top:196px;font-family:'Liberation Serif',serif;font-size:17px;color:#2a2d33">A1</div>
<div class="tri" style="left:232px;top:203px"></div>
<div class="a" style="left:350px;top:190px;width:984px;height:28px;background:#fff;border:1px solid #dcdee3;border-radius:3px"></div>
<div class="t" style="left:365px;top:194px;font-size:17px;letter-spacing:1.4px;color:#333">用户信息</div>
<!--FORMULAICONS--><svg style="left:293px;top:193px" width="22" height="21" viewBox="0 0 22 21"><circle cx="9" cy="9" r="7.6" stroke="#3b4049" stroke-width="1.6" fill="none"/><path d="M5.5 7.5 H12.5 M5.5 10.5 H12.5" stroke="#3b4049" stroke-width="1.4"/><path d="M14.5 14.5 L20 20" stroke="#3b4049" stroke-width="1.8"/></svg>
<div class="t" style="left:322px;top:193px;font-family:'Liberation Serif',serif;font-style:italic;font-size:22px;color:#3b4049">fx</div>
<!--/FORMULAICONS-->
<!-- GRID -->
<!--GRID--><div class="a" style="left:10px;top:227px;width:40px;height:23px;background:#f3f4f6"></div>
<svg style="left:33px;top:233px" width="14" height="13"><path d="M13 0 L13 12 L0 12 Z" fill="#b4b7bd"/></svg>
<div class="a" style="left:50px;top:227px;width:1264px;height:23px;background:#d3d5da"></div>
<div class="a" style="left:215px;top:228px;width:1px;height:22px;background:#dcdee2"></div>
<div class="a" style="left:413px;top:228px;width:1px;height:22px;background:#dcdee2"></div>
<div class="a" style="left:545px;top:228px;width:1px;height:22px;background:#dcdee2"></div>
<div class="a" style="left:677px;top:228px;width:1px;height:22px;background:#dcdee2"></div>
<div class="a" style="left:809px;top:228px;width:1px;height:22px;background:#dcdee2"></div>
<div class="a" style="left:941px;top:228px;width:1px;height:22px;background:#dcdee2"></div>
<div class="a" style="left:1073px;top:228px;width:1px;height:22px;background:#dcdee2"></div>
<div class="a" style="left:1205px;top:228px;width:1px;height:22px;background:#dcdee2"></div>
<div class="colh" style="left:102.5px;top:228px;width:60px">A</div>
<div class="colh" style="left:284.0px;top:228px;width:60px">B</div>
<div class="colh" style="left:449.0px;top:228px;width:60px">C</div>
<div class="colh" style="left:581.0px;top:228px;width:60px">D</div>
<div class="colh" style="left:713.0px;top:228px;width:60px">E</div>
<div class="colh" style="left:845.0px;top:228px;width:60px">F</div>
<div class="colh" style="left:977.0px;top:228px;width:60px">G</div>
<div class="colh" style="left:1109.0px;top:228px;width:60px">H</div>
<div class="colh" style="left:1241.0px;top:228px;width:60px">I</div>
<div class="a" style="left:10px;top:250px;width:40px;height:598px;background:#f3f4f6"></div>
<div class="a" style="left:10px;top:250px;width:40px;height:37px;background:#d3d5da"></div>
<div class="a" style="left:50px;top:250px;width:1264px;height:598px;background:#fff"></div>
<div class="a" style="left:16px;top:316px;width:34px;height:1px;background:#c7c9d3"></div>
<div class="a" style="left:50px;top:316px;width:1264px;height:1px;background:#c7c9d3"></div>
<div class="a" style="left:16px;top:345px;width:34px;height:1px;background:#c7c9d3"></div>
<div class="a" style="left:50px;top:345px;width:1264px;height:1px;background:#c7c9d3"></div>
<div class="a" style="left:16px;top:374px;width:34px;height:1px;background:#c7c9d3"></div>
<div class="a" style="left:50px;top:374px;width:1264px;height:1px;background:#c7c9d3"></div>
<div class="a" style="left:16px;top:403px;width:34px;height:1px;background:#c7c9d3"></div>
<div class="a" style="left:50px;top:403px;width:1264px;height:1px;background:#c7c9d3"></div>
<div class="a" style="left:16px;top:432px;width:34px;height:1px;background:#c7c9d3"></div>
<div class="a" style="left:50px;top:432px;width:1264px;height:1px;background:#c7c9d3"></div>
<div class="a" style="left:16px;top:461px;width:34px;height:1px;background:#c7c9d3"></div>
<div class="a" style="left:50px;top:461px;width:1264px;height:1px;background:#c7c9d3"></div>
<div class="a" style="left:16px;top:490px;width:34px;height:1px;background:#c7c9d3"></div>
<div class="a" style="left:50px;top:490px;width:1264px;height:1px;background:#c7c9d3"></div>
<div class="a" style="left:16px;top:519px;width:34px;height:1px;background:#c7c9d3"></div>
<div class="a" style="left:50px;top:519px;width:1264px;height:1px;background:#c7c9d3"></div>
<div class="a" style="left:16px;top:548px;width:34px;height:1px;background:#c7c9d3"></div>
<div class="a" style="left:50px;top:548px;width:1264px;height:1px;background:#c7c9d3"></div>
<div class="a" style="left:16px;top:577px;width:34px;height:1px;background:#c7c9d3"></div>
<div class="a" style="left:50px;top:577px;width:1264px;height:1px;background:#c7c9d3"></div>
<div class="a" style="left:16px;top:606px;width:34px;height:1px;background:#c7c9d3"></div>
<div class="a" style="left:50px;top:606px;width:1264px;height:1px;background:#c7c9d3"></div>
<div class="a" style="left:16px;top:635px;width:34px;height:1px;background:#c7c9d3"></div>
<div class="a" style="left:50px;top:635px;width:1264px;height:1px;background:#c7c9d3"></div>
<div class="a" style="left:16px;top:664px;width:34px;height:1px;background:#c7c9d3"></div>
<div class="a" style="left:50px;top:664px;width:1264px;height:1px;background:#c7c9d3"></div>
<div class="a" style="left:16px;top:693px;width:34px;height:1px;background:#c7c9d3"></div>
<div class="a" style="left:50px;top:693px;width:1264px;height:1px;background:#c7c9d3"></div>
<div class="a" style="left:16px;top:722px;width:34px;height:1px;background:#c7c9d3"></div>
<div class="a" style="left:50px;top:722px;width:1264px;height:1px;background:#c7c9d3"></div>
<div class="a" style="left:16px;top:751px;width:34px;height:1px;background:#c7c9d3"></div>
<div class="a" style="left:50px;top:751px;width:1264px;height:1px;background:#c7c9d3"></div>
<div class="a" style="left:16px;top:780px;width:34px;height:1px;background:#c7c9d3"></div>
<div class="a" style="left:50px;top:780px;width:1264px;height:1px;background:#c7c9d3"></div>
<div class="a" style="left:16px;top:809px;width:34px;height:1px;background:#c7c9d3"></div>
<div class="a" style="left:50px;top:809px;width:1264px;height:1px;background:#c7c9d3"></div>
<div class="a" style="left:16px;top:838px;width:34px;height:1px;background:#c7c9d3"></div>
<div class="a" style="left:50px;top:838px;width:1264px;height:1px;background:#c7c9d3"></div>
<div class="a" style="left:215px;top:287px;width:1px;height:561px;background:#c7c9d3"></div>
<div class="a" style="left:413px;top:287px;width:1px;height:561px;background:#c7c9d3"></div>
<div class="a" style="left:545px;top:287px;width:1px;height:561px;background:#c7c9d3"></div>
<div class="a" style="left:677px;top:287px;width:1px;height:561px;background:#c7c9d3"></div>
<div class="a" style="left:809px;top:287px;width:1px;height:561px;background:#c7c9d3"></div>
<div class="a" style="left:941px;top:287px;width:1px;height:561px;background:#c7c9d3"></div>
<div class="a" style="left:1073px;top:287px;width:1px;height:561px;background:#c7c9d3"></div>
<div class="a" style="left:1205px;top:287px;width:1px;height:561px;background:#c7c9d3"></div>
<div class="a" style="left:50px;top:250px;width:1px;height:598px;background:#b9bcc4"></div>
<div class="rowh" style="left:10px;top:251px;height:37px;line-height:37px;color:#3fae80">1</div>
<div class="rowh" style="left:10px;top:288px;height:29px;line-height:29px;color:#1f2329">2</div>
<div class="rowh" style="left:10px;top:317px;height:29px;line-height:29px;color:#1f2329">3</div>
<div class="rowh" style="left:10px;top:346px;height:29px;line-height:29px;color:#1f2329">4</div>
<div class="rowh" style="left:10px;top:375px;height:29px;line-height:29px;color:#1f2329">5</div>
<div class="rowh" style="left:10px;top:404px;height:29px;line-height:29px;color:#1f2329">6</div>
<div class="rowh" style="left:10px;top:433px;height:29px;line-height:29px;color:#1f2329">7</div>
<div class="rowh" style="left:10px;top:462px;height:29px;line-height:29px;color:#1f2329">8</div>
<div class="rowh" style="left:10px;top:491px;height:29px;line-height:29px;color:#1f2329">9</div>
<div class="rowh" style="left:10px;top:520px;height:29px;line-height:29px;color:#1f2329">10</div>
<div class="rowh" style="left:10px;top:549px;height:29px;line-height:29px;color:#1f2329">11</div>
<div class="rowh" style="left:10px;top:578px;height:29px;line-height:29px;color:#1f2329">12</div>
<div class="rowh" style="left:10px;top:607px;height:29px;line-height:29px;color:#1f2329">13</div>
<div class="rowh" style="left:10px;top:636px;height:29px;line-height:29px;color:#1f2329">14</div>
<div class="rowh" style="left:10px;top:665px;height:29px;line-height:29px;color:#1f2329">15</div>
<div class="rowh" style="left:10px;top:694px;height:29px;line-height:29px;color:#1f2329">16</div>
<div class="rowh" style="left:10px;top:723px;height:29px;line-height:29px;color:#1f2329">17</div>
<div class="rowh" style="left:10px;top:752px;height:29px;line-height:29px;color:#1f2329">18</div>
<div class="rowh" style="left:10px;top:781px;height:29px;line-height:29px;color:#1f2329">19</div>
<div class="rowh" style="left:10px;top:810px;height:29px;line-height:29px;color:#1f2329">20</div>
<div class="rowh" style="left:10px;top:839px;height:29px;line-height:29px;color:#1f2329">21</div>
<div class="a" style="left:49px;top:250px;width:1270px;height:39px;border:3px solid #27a96f"></div>
<div class="t" style="left:794px;top:257px;font-size:25.3px;font-weight:bold;color:#000">用户信息</div>
<div class="cell" style="left:62.5px;top:289px;width:140px;height:29px;line-height:29px;font-size:18px">用户名称</div>
<div class="cell" style="left:244.0px;top:289px;width:140px;height:29px;line-height:29px;font-size:18px">用户密码</div>
<div class="cell" style="left:409.0px;top:289px;width:140px;height:29px;line-height:29px;font-size:18px">用户类型</div>
<div class="cell" style="left:541.0px;top:289px;width:140px;height:29px;line-height:29px;font-size:18px">系统设置</div>
<div class="cell" style="left:673.0px;top:289px;width:140px;height:29px;line-height:29px;font-size:18px">删除记录</div>
<div class="cell" style="left:805.0px;top:289px;width:140px;height:29px;line-height:29px;font-size:18px">曲线监控</div>
<div class="cell" style="left:937.0px;top:289px;width:140px;height:29px;line-height:29px;font-size:18px">数据查询</div>
<div class="cell" style="left:1069.0px;top:289px;width:140px;height:29px;line-height:29px;font-size:18px">模块A</div>
<div class="cell" style="left:1201.0px;top:289px;width:140px;height:29px;line-height:29px;font-size:18px">模块B</div>
<div class="cell" style="left:62.5px;top:317px;width:140px;height:29px;line-height:29px;font-size:19px">admin</div>
<div class="cell" style="left:244.0px;top:317px;width:140px;height:29px;line-height:29px;font-size:19px">admin</div>
<div class="cell" style="left:409.0px;top:318px;width:140px;height:29px;line-height:29px;font-size:18px">管理员</div>
<div class="cell" style="left:541.0px;top:318px;width:140px;height:29px;line-height:29px;font-size:18px">启用</div>
<div class="cell" style="left:673.0px;top:318px;width:140px;height:29px;line-height:29px;font-size:18px">启用</div>
<div class="cell" style="left:805.0px;top:318px;width:140px;height:29px;line-height:29px;font-size:18px">启用</div>
<div class="cell" style="left:937.0px;top:318px;width:140px;height:29px;line-height:29px;font-size:18px">启用</div>
<div class="cell" style="left:1069.0px;top:318px;width:140px;height:29px;line-height:29px;font-size:18px">启用</div>
<div class="cell" style="left:1201.0px;top:318px;width:140px;height:29px;line-height:29px;font-size:18px">启用</div>
<div class="cell" style="left:62.5px;top:346px;width:140px;height:29px;line-height:29px;font-size:19px">feiyang</div>
<div class="cell" style="left:244.0px;top:346px;width:140px;height:29px;line-height:29px;font-size:19px">123456</div>
<div class="cell" style="left:409.0px;top:347px;width:140px;height:29px;line-height:29px;font-size:18px">操作员</div>
<div class="cell" style="left:541.0px;top:347px;width:140px;height:29px;line-height:29px;font-size:18px">禁用</div>
<div class="cell" style="left:673.0px;top:347px;width:140px;height:29px;line-height:29px;font-size:18px">禁用</div>
<div class="cell" style="left:805.0px;top:347px;width:140px;height:29px;line-height:29px;font-size:18px">启用</div>
<div class="cell" style="left:937.0px;top:347px;width:140px;height:29px;line-height:29px;font-size:18px">启用</div>
<div class="cell" style="left:1069.0px;top:347px;width:140px;height:29px;line-height:29px;font-size:18px">禁用</div>
<div class="cell" style="left:1201.0px;top:347px;width:140px;height:29px;line-height:29px;font-size:18px">启用</div><!--/GRID-->
<!-- SIDEBAR -->
<!--SIDEBAR--><!-- vertical scrollbar -->
<div class="a" style="left:1314px;top:227px;width:21px;height:621px;background:#f3f4f6"></div>
<svg style="left:1319px;top:232px" width="14" height="6" viewBox="0 0 14 6"><path d="M1 1 H13 M1 4.8 H13" stroke="#9a9ea6" stroke-width="1"/></svg>
<div class="a" style="left:1318px;top:244px;width:17px;height:604px;background:#e8e9ed"></div>
<svg style="left:1322px;top:251px" width="9" height="6" viewBox="0 0 9 6"><path d="M0 5 L4.5 0.5 L9 5 Z" fill="#8e939b"/></svg>
<div class="a" style="left:1319px;top:268px;width:15px;height:512px;background:#d3d5db;border-radius:7px"></div>
<svg style="left:1322px;top:833px" width="9" height="6" viewBox="0 0 9 6"><path d="M0 0.5 L4.5 5 L9 0.5 Z" fill="#8e939b"/></svg>
<!-- sidebar -->
<div class="a" style="left:1335px;top:176px;width:55px;height:699px;background:#f3f4f6;border-left:1px solid #e2e4e8"></div>
<svg style="left:1350px;top:187px" width="24" height="6" viewBox="0 0 24 6"><path d="M0 1 H24 M0 4.8 H24" stroke="#b9bcc2" stroke-width="1"/></svg>
<svg style="left:1353px;top:220px" width="19" height="19" viewBox="0 0 19 19" stroke="#4a4f58" stroke-width="1.4" fill="none" stroke-linejoin="round"><path d="M7 13 Q4.5 11.5 3.5 9.5 L1.5 9 Q3 5 7 6 Q11 1 17.5 1 Q17.5 7.5 12.5 11.5 Q13.5 15.5 9.5 17 L9 15 Q7.5 14.5 6 13"/><circle cx="12.5" cy="6" r="1.5"/><path d="M1 17.5 L3.5 15 M4 18 L5.5 16.5 M0.5 14 L2 12.5"/></svg>
<svg style="left:1356px;top:263px" width="16" height="21" viewBox="0 0 16 21" stroke="#4a4f58" stroke-width="1.5" fill="none" stroke-linejoin="round"><path d="M1 1 V16.5 L5 12.5 L8 19.5 L11 18 L8.2 11.5 H14.5 Z"/></svg>
<svg style="left:1352px;top:308px" width="22" height="17" viewBox="0 0 22 17" stroke="#7d828a" stroke-width="1.4" fill="none"><circle cx="3.5" cy="3.5" r="2.5"/><path d="M6 3.5 H21"/><circle cx="17.5" cy="13" r="2.5"/><path d="M1 13 H15"/></svg>
<svg style="left:1353px;top:352px" width="20" height="19" viewBox="0 0 20 19" stroke="#a0a4ab" stroke-width="1.6" fill="none"><rect x="1" y="6" width="3" height="12" fill="#c3c6cc" stroke="none"/><rect x="1" y="1" width="3" height="3" fill="#c3c6cc" stroke="none"/><rect x="6.5" y="1" width="12" height="3" fill="#c3c6cc" stroke="none"/><path d="M8 14.5 H16.5 V9 M14 11 L16.5 8.5 L19 11 M8 14.5 L10.5 12 M8 14.5 L10.5 17"/></svg>
<svg style="left:1352px;top:396px" width="20" height="20" viewBox="0 0 20 20"><circle cx="10" cy="10" r="9" stroke="#4a4f58" stroke-width="1.5" fill="none"/><path d="M7 7.5 Q7 4.5 10 4.5 Q13 4.5 13 7.3 Q13 9.3 10.5 10.3 Q10 10.7 10 12.3" stroke="#4a4f58" stroke-width="1.5" fill="none"/><circle cx="10" cy="15" r="1" fill="#4a4f58"/></svg>
<svg style="left:1352px;top:441px" width="21" height="18" viewBox="0 0 21 18" stroke="#4a4f58" stroke-width="1.5" fill="none" stroke-linejoin="round"><path d="M8 16.5 H1.5 V7.5 M1.5 5 L3 1.5 H16 L17.5 5 V7 M1.5 5 Q1.5 7.5 4 7.5 Q6.5 7.5 6.5 5 Q6.5 7.5 9 7.5 Q11.5 7.5 11.5 5 M5 16.5 V11.5 H8"/><path d="M11 17 Q9 13 13 10.5 Q14 14 11 17 Z M13 17 Q15 12 20 12 Q18 16.5 13 17 Z"/></svg>
<svg style="left:1352px;top:484px" width="20" height="21" viewBox="0 0 20 21" stroke="#4a4f58" stroke-width="1.5" fill="none" stroke-linejoin="round"><path d="M6.5 19.5 H13.5 V16.5 Q18.5 14 18.5 9.5 Q18.5 1.5 10 1.5 Q1.5 1.5 1.5 9.5 Q1.5 14 6.5 16.5 Z"/><path d="M11 4.5 L7.5 10.5 H12 L9 15"/></svg>
<div class="a" style="left:1336px;top:822px;width:52px;height:1px;background:#e2e4e8"></div>
<svg style="left:1352px;top:848px" width="21" height="8" viewBox="0 0 21 8" stroke="#4a4f58" stroke-width="1.5" fill="none"><circle cx="3" cy="4" r="2"/><circle cx="10.5" cy="4" r="2"/><circle cx="18" cy="4" r="2"/></svg>
<!--/SIDEBAR-->
<!-- BOTTOM -->
<!--BOTTOM--><!-- sheet tab bar -->
<div class="a" style="left:10px;top:848px;width:1304px;height:27px;background:#f3f4f6;border-top:1px solid #e3e5e8"></div>
<div class="a" style="left:1314px;top:848px;width:21px;height:27px;background:#f3f4f6"></div>
<svg style="left:29px;top:855px" width="108" height="15" viewBox="0 0 108 15" stroke="#a9acb2" stroke-width="1.4" fill="none"><path d="M1.5 0.5 V14 M11 0.5 L4 7.2 L11 14"/><path d="M41 0.5 L34 7.2 L41 14"/><path d="M66.5 0.5 L73.5 7.2 L66.5 14"/><path d="M95.5 0.5 L102.5 7.2 L95.5 14 M106 0.5 V14"/></svg>
<div class="a" style="left:158px;top:848px;width:97px;height:27px;background:#fff;border-left:1px solid #e3e5e8;border-right:1px solid #e3e5e8"></div>
<div class="t" style="left:178px;top:855px;font-size:15px;font-weight:bold;color:#27a36d">用户信息</div>
<svg style="left:262px;top:855px" width="16" height="15" viewBox="0 0 16 15"><path d="M7.5 0 V14.5 M0.5 7.2 H15" stroke="#4a4f58" stroke-width="1.6"/></svg>
<svg style="left:777px;top:854px" width="5" height="13" viewBox="0 0 5 13"><path d="M1 0.5 V12.5 M4 0.5 V12.5" stroke="#7a7f87" stroke-width="1"/></svg>
<div class="a" style="left:788px;top:853px;width:509px;height:17px;background:#e8e9ed"></div>
<svg style="left:795px;top:858px" width="6" height="8" viewBox="0 0 6 8"><path d="M5.5 0 L0.5 4 L5.5 8 Z" fill="#8e939b"/></svg>
<div class="a" style="left:812px;top:854px;width:346px;height:15px;background:#d3d5db;border-radius:7.5px"></div>
<svg style="left:1284px;top:858px" width="6" height="8" viewBox="0 0 6 8"><path d="M0.5 0 L5.5 4 L0.5 8 Z" fill="#8e939b"/></svg>
<svg style="left:1302px;top:854px" width="5" height="13" viewBox="0 0 5 13"><path d="M1 0.5 V12.5 M4 0.5 V12.5" stroke="#7a7f87" stroke-width="1"/></svg>
<!-- status bar -->
<div class="a" style="left:10px;top:875px;width:1380px;height:33px;background:#f5f6f8;border-top:1px solid #e3e5e8"></div>
<svg style="left:25px;top:882px" width="22" height="20" viewBox="0 0 22 20"><path d="M10.5 12.8 H1.6 V1.6 H15.2 V3.2 M15.6 2.6 Q19.3 2 19.3 5 V9.5" stroke="#4a4f58" stroke-width="1.4" fill="none"/><text x="7.5" y="18.5" font-family="Liberation Sans" font-style="italic" font-size="10.5" fill="#2f343b" letter-spacing="-0.3">JS</text></svg>
<div class="a" style="left:59px;top:882px;width:1px;height:20px;background:#e2e4e8"></div>
<div class="t" style="left:73px;top:884px;font-size:16px;color:#33373d">平均值=0</div><div class="t" style="left:146px;top:884px;font-size:16px;color:#33373d">计数=1</div><div class="t" style="left:204px;top:884px;font-size:16px;color:#33373d">求和=0</div>
<svg style="left:849px;top:882px" width="21" height="18" viewBox="0 0 21 18" stroke="#4a4f58" stroke-width="1.5" fill="none"><path d="M1 11 Q10.5 1.5 20 11 Q10.5 20.5 1 11 Z"/><circle cx="10.5" cy="11" r="3.3"/><path d="M10.5 0.5 V3 M3.5 2 L5 4.5 M17.5 2 L16 4.5" stroke-width="1.3"/></svg>
<svg style="left:877px;top:882px" width="21" height="19" viewBox="0 0 21 19" stroke="#4a4f58" stroke-width="1.5" fill="none"><path d="M7 1 H14 V6 H19.5 V13 H14 V18 H7 V13 H1.5 V6 H7 Z M7 6 H14 V13 H7 Z"/></svg>
<div class="tri" style="left:901px;top:890px"></div>
<div class="a" style="left:922px;top:882px;width:1px;height:20px;background:#e2e4e8"></div>
<div class="a" style="left:933px;top:877px;width:29px;height:29px;background:#dcdee3"></div>
<svg style="left:937px;top:884px" width="21" height="16" viewBox="0 0 21 16" stroke="#4a4f58" stroke-width="1.6" fill="none"><rect x="1" y="1" width="19" height="14"/><path d="M1 5.6 H20 M1 10.3 H20 M7.3 1 V15 M13.6 1 V15"/></svg>
<svg style="left:969px;top:881px" width="20" height="21" viewBox="0 0 20 21" stroke="#4a4f58" fill="none"><rect x="1" y="1" width="18" height="19" stroke-width="1.8"/><rect x="4" y="4" width="12" height="13" stroke-width="1.3"/><path d="M10 4 V17" stroke-width="1.4"/></svg>
<svg style="left:1001px;top:883px" width="21" height="18" viewBox="0 0 21 18" stroke="#4a4f58" stroke-width="1.6" fill="none"><path d="M1 1 V17 H20 V1 H11 V10 H1 M6 1 V10"/></svg>
<div class="a" style="left:1037px;top:882px;width:1px;height:20px;background:#e2e4e8"></div>
<div class="t" style="left:1049px;top:885px;font-size:16px;color:#33373d">100%</div>
<div class="tri" style="left:1095px;top:890px"></div>
<div class="a" style="left:1115px;top:890px;width:11px;height:2.5px;background:#4a4f58"></div>
<div class="a" style="left:1141px;top:891px;width:84px;height:1px;background:#555a62"></div>
<div class="a" style="left:1225px;top:891px;width:86px;height:1px;background:#c5c8ce"></div>
<div class="a" style="left:1218px;top:884px;width:15px;height:15px;border-radius:50%;background:#ebecef;border:1.2px solid #4e535b"></div>
<svg style="left:1325px;top:885px" width="13" height="13" viewBox="0 0 13 13"><path d="M6.5 0.5 V12.5 M0.5 6.5 H12.5" stroke="#3b4049" stroke-width="2.4"/></svg>
<svg style="left:1352px;top:882px" width="19" height="19" viewBox="0 0 19 19" stroke="#4a4f58" stroke-width="1.6" fill="none"><path d="M1 6 V1 H6 M1 1 L6.5 6.5 M13 1 H18 V6 M18 1 L12.5 6.5 M1 13 V18 H6 M1 18 L6.5 12.5 M18 13 V18 H13 M18 18 L12.5 12.5"/></svg>
<!--/BOTTOM-->

</body></html>
